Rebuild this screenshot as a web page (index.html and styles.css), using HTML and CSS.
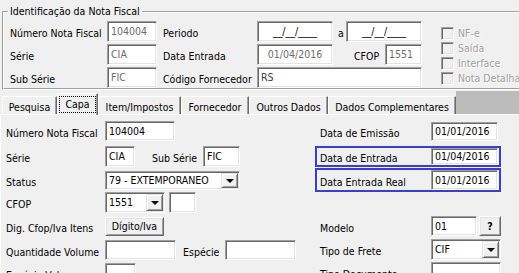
FILE: index.html
```html
<!DOCTYPE html>
<html lang="pt-BR">
<head>
    <meta charset="UTF-8">
    <meta name="viewport" content="width=device-width, initial-scale=1.0">
    <title>Nota Fiscal de Entrada</title>
    <link rel="stylesheet" href="styles.css">
</head>
<body>
    <div class="window">
        <div class="frame">
            <div class="frame-inner">
                <div class="legend">Identificação da Nota Fiscal</div>
                <div class="ident">
                    <div class="ident-fields">
                        <div class="irow">
                            <span class="lbl w-l1">Número Nota Fiscal</span>
                            <span class="edit off w50">104004</span>
                            <span class="lbl w-l2">Periodo</span>
                            <span class="edit mask w76">__/__/____</span>
                            <span class="lbl w-a">a</span>
                            <span class="edit mask w76">__/__/____</span>
                        </div>
                        <div class="irow">
                            <span class="lbl w-l1">Série</span>
                            <span class="edit off w50">CIA</span>
                            <span class="lbl w-l2">Data Entrada</span>
                            <span class="edit off mask w76">01/04/2016</span>
                            <span class="lbl w-cfop">CFOP</span>
                            <span class="edit off w37">1551</span>
                        </div>
                        <div class="irow">
                            <span class="lbl w-l1">Sub Série</span>
                            <span class="edit off w50">FIC</span>
                            <span class="lbl w-l2">Código Fornecedor</span>
                            <span class="edit dim w165">RS</span>
                        </div>
                    </div>
                    <div class="checks">
                        <div class="check"><span class="box"></span>NF-e</div>
                        <div class="check"><span class="box"></span>Saída</div>
                        <div class="check"><span class="box"></span>Interface</div>
                        <div class="check"><span class="box"></span>Nota Detalhada</div>
                    </div>
                </div>
            </div>
        </div>

        <div class="tabs">
            <div class="tab t-pesq">Pesquisa</div>
            <div class="tab active t-capa"><span class="focus">Capa</span></div>
            <div class="tab t-item">Item/Impostos</div>
            <div class="tab t-forn">Fornecedor</div>
            <div class="tab t-outros">Outros Dados</div>
            <div class="tab t-dados">Dados Complementares</div>
            <div class="tab-fill"></div>
        </div>

        <div class="page">
            <div class="col-left">
                <div class="row r-nnf">
                    <span class="lbl w-left">Número Nota Fiscal</span>
                    <span class="edit w70">104004</span>
                </div>
                <div class="row r-serie">
                    <span class="lbl w-left">Série</span>
                    <span class="edit w30">CIA</span>
                    <span class="lbl w-sub">Sub Série</span>
                    <span class="edit w37">FIC</span>
                </div>
                <div class="row r-status">
                    <span class="lbl w-left">Status</span>
                    <span class="combo w135"><span class="combo-text">79 - EXTEMPORANEO</span><span class="drop"></span></span>
                </div>
                <div class="row r-cfop">
                    <span class="lbl w-left">CFOP</span>
                    <span class="combo w60"><span class="combo-text">1551</span><span class="drop"></span></span>
                    <span class="edit w27 gap4"></span>
                </div>
                <div class="row r-dig">
                    <span class="lbl w-left">Dig. Cfop/Iva Itens</span>
                    <span class="btn w59">Dígito/Iva</span>
                </div>
                <div class="row r-qtd">
                    <span class="lbl w-left">Quantidade Volume</span>
                    <span class="edit w71"></span>
                    <span class="lbl w-esp">Espécie</span>
                    <span class="edit w71"></span>
                </div>
                <div class="row r-espvol">
                    <span class="lbl w-left">Espécie Volume</span>
                    <span class="edit w31"></span>
                </div>
            </div>

            <div class="col-right">
                <div class="row r-emissao">
                    <span class="lbl w-right">Data de Emissão</span>
                    <span class="edit w67">01/01/2016</span>
                </div>
                <div class="row mark r-entrada">
                    <span class="lbl w-right-in">Data de Entrada</span>
                    <span class="edit w67">01/04/2016</span>
                </div>
                <div class="row mark r-real">
                    <span class="lbl w-right-in">Data Entrada Real</span>
                    <span class="edit w67">01/01/2016</span>
                </div>
                <div class="row r-modelo">
                    <span class="lbl w-right">Modelo</span>
                    <span class="edit w46">01</span>
                    <span class="btn help">?</span>
                </div>
                <div class="row r-frete">
                    <span class="lbl w-right">Tipo de Frete</span>
                    <span class="combo w70"><span class="combo-text">CIF</span><span class="drop"></span></span>
                </div>
                <div class="row r-tipodoc">
                    <span class="lbl w-right">Tipo Documento</span>
                    <span class="edit w70"></span>
                </div>
            </div>
        </div>
    </div>
</body>
</html>
```

FILE: styles.css
```css
* {
    margin: 0;
    padding: 0;
    box-sizing: border-box;
}

html, body {
    overflow: hidden;
}

body {
    background: #f0f0f0;
    font-family: "DejaVu Sans Condensed", "Liberation Sans", sans-serif;
    font-size: 10.5px;
    line-height: 13px;
    color: #000;
}

.window {
    width: 560px;
    height: 273px;
}

/* group box "Identificação da Nota Fiscal" */
.frame {
    margin: 11px 0 0 2px;
    width: 545px;
    height: 79px;
    border: 1px solid;
    border-color: #a0a0a0 #fff #fff #a0a0a0;
}

.frame-inner {
    height: 100%;
    border: 1px solid;
    border-color: #fff #a0a0a0 #a0a0a0 #fff;
    padding-left: 6px;
}

.legend {
    width: fit-content;
    margin: -8px 0 0 -2px;
    padding: 0 2px;
    height: 13px;
    background: #f0f0f0;
}

.ident {
    display: flex;
    margin-top: 3px;
}

.irow {
    display: flex;
    align-items: center;
    height: 21px;
    margin-bottom: 2px;
}

.lbl {
    white-space: nowrap;
    flex-shrink: 0;
    padding-top: 4px;
}

.w-l1 { width: 97px; }
.w-l2 { width: 94px; margin-left: 6px; }
.w-a { width: 8px; margin-left: 5px; }
.w-cfop { width: 31px; margin-left: 21px; }

.checks {
    margin-left: 19px;
    padding-top: 5px;
}

.check {
    display: flex;
    align-items: center;
    height: 15px;
    color: #a0a0a0;
    text-shadow: 1px 1px 0 #fff;
    white-space: nowrap;
}

.check .box {
    width: 13px;
    height: 13px;
    margin-right: 4px;
    border: 1px solid;
    border-color: #a0a0a0 #fff #fff #a0a0a0;
    box-shadow: inset 1px 1px 0 #696969, inset -1px -1px 0 #e3e3e3;
    background: #f0f0f0;
}

/* sunken edit boxes */
.edit {
    flex-shrink: 0;
    height: 100%;
    padding: 0 3px;
    background: #fff;
    border: 1px solid;
    border-color: #a0a0a0 #fff #fff #a0a0a0;
    box-shadow: inset 1px 1px 0 #696969, inset -1px -1px 0 #e3e3e3;
    display: flex;
    align-items: center;
    white-space: nowrap;
    overflow: hidden;
}

.edit.off {
    color: #6d6d6d;
}

.edit.dim {
    color: #3c3c3c;
}

.edit.mask {
    justify-content: center;
}

.w27 { width: 27px; }
.w30 { width: 30px; }
.w31 { width: 31px; }
.w37 { width: 37px; }
.w46 { width: 46px; }
.w50 { width: 50px; }
.w59 { width: 59px; }
.w60 { width: 60px; }
.w67 { width: 67px; }
.w70 { width: 70px; }
.w71 { width: 71px; }
.w76 { width: 76px; }
.w135 { width: 135px; }
.w165 { width: 165px; }

.gap4 { margin-left: 4px; }

/* combo boxes */
.combo {
    display: flex;
    flex-shrink: 0;
    height: 100%;
    background: #fff;
    border: 1px solid;
    border-color: #a0a0a0 #fff #fff #a0a0a0;
    box-shadow: inset 1px 1px 0 #696969, inset -1px -1px 0 #e3e3e3;
    padding: 1px;
}

.combo-text {
    flex: 1;
    display: flex;
    align-items: center;
    padding-left: 2px;
    white-space: nowrap;
}

.drop {
    width: 17px;
    position: relative;
    background: #f0f0f0;
    border: 1px solid;
    border-color: #e3e3e3 #696969 #696969 #e3e3e3;
    box-shadow: inset 1px 1px 0 #fff, inset -1px -1px 0 #a0a0a0;
}

.drop::after {
    content: "";
    position: absolute;
    left: 4px;
    top: 50%;
    margin-top: -2px;
    border-left: 4px solid transparent;
    border-right: 4px solid transparent;
    border-top: 4px solid #000;
}

/* raised buttons */
.btn {
    display: flex;
    align-items: center;
    justify-content: center;
    flex-shrink: 0;
    height: 100%;
    background: #f0f0f0;
    border: 1px solid;
    border-color: #fff #696969 #696969 #fff;
    box-shadow: inset 1px 1px 0 #e3e3e3, inset -1px -1px 0 #a0a0a0;
    white-space: nowrap;
}

.btn.help {
    width: 22px;
    margin-left: 2px;
    font-weight: bold;
}

/* tabs */
.tabs {
    display: flex;
    align-items: flex-end;
    height: 24px;
    padding-left: 2px;
    background: #f0f0f0;
}

.tab {
    height: 18px;
    padding-top: 4px;
    text-align: center;
    white-space: nowrap;
    background: #f0f0f0;
    border-top: 1px solid #fff;
    border-left: 1px solid #fff;
    border-right: 1px solid #696969;
    box-shadow: inset -1px 0 0 #a0a0a0;
}

.tab.active {
    height: 22px;
    margin-bottom: -1px;
    padding-top: 2px;
    position: relative;
    z-index: 1;
}

.tab-fill {
    flex: 1;
    height: 23px;
    background: #bcbcbc;
}

.focus {
    display: inline-block;
    padding: 1px 5px 1px 5px;
    border: 1px dotted #000;
}

.t-pesq { width: 55px; }
.t-capa { width: 41px; }
.t-item { width: 83px; }
.t-forn { width: 68px; }
.t-outros { width: 79px; }
.t-dados { width: 128px; }

/* page "Capa" */
.page {
    display: flex;
    height: 159px;
    border-top: 1px solid #fff;
    border-left: 1px solid #fff;
}

.col-left {
    width: 314px;
    padding-left: 5px;
}

.col-right {
    width: 186px;
}

.row {
    display: flex;
    align-items: center;
}

.w-left { width: 99px; }
.w-sub { width: 51px; margin-left: 17px; }
.w-esp { width: 42px; margin-left: 7px; }
.w-right { width: 116px; padding-left: 5px; }
.w-right-in { width: 114px; padding-left: 3px; }

.r-nnf { margin-top: 6px; height: 20px; }
.r-serie { margin-top: 5px; height: 21px; }
.r-status { margin-top: 4px; height: 19px; }
.r-cfop { margin-top: 2px; height: 21px; }
.r-dig { margin-top: 4px; height: 19px; }
.r-qtd { margin-top: 4px; height: 20px; }
.r-espvol { margin-top: 3px; height: 20px; }

.r-emissao { margin-top: 7px; height: 19px; }
.r-entrada { margin-top: 5px; height: 21px; }
.r-real { margin-top: 1px; height: 24px; }
.r-modelo { margin-top: 24px; height: 20px; }
.r-frete { margin-top: 3px; height: 21px; }
.r-tipodoc { margin-top: 2px; height: 20px; }

.mark {
    border: 2px solid #3a3ed0;
}

.r-real .edit {
    height: 20px;
}
```
